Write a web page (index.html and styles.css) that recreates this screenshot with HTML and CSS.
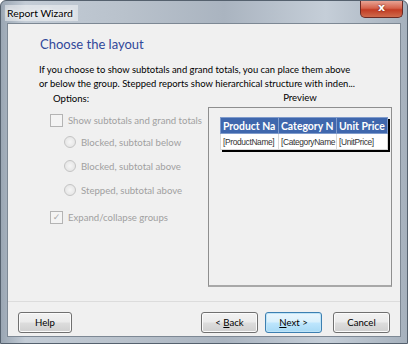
FILE: index.html
```html
<!DOCTYPE html>
<html lang="en">
<head>
    <meta charset="UTF-8"/>
    <title>Report Wizard</title>
    <link rel="stylesheet" href="styles.css">
</head>
<body>
<div class="window">
    <div class="titlebar">
        <span class="title">Report Wizard</span>
        <div class="close">x</div>
    </div>
    <div class="client">
        <div class="heading">Choose the layout</div>
        <div class="desc">
            If you choose to show subtotals and grand totals, you can place them above<br/>
            or below the group. Stepped reports show hierarchical structure with inden...
        </div>
        <div class="body">
            <div class="options">
                <div class="label">Options:</div>
                <div class="opt check-row">
                    <span class="box"></span>
                    <span>Show subtotals and grand totals</span>
                </div>
                <div class="opt radio-row first"><span class="radio"></span><span>Blocked, subtotal below</span></div>
                <div class="opt radio-row"><span class="radio"></span><span>Blocked, subtotal above</span></div>
                <div class="opt radio-row"><span class="radio"></span><span>Stepped, subtotal above</span></div>
                <div class="opt check-row expand">
                    <span class="box checked">&#10003;</span>
                    <span>Expand/collapse groups</span>
                </div>
            </div>
            <div class="preview">
                <div class="label center">Preview</div>
                <div class="preview-box">
                    <table class="grid">
                        <colgroup>
                            <col class="c1"/>
                            <col class="c2"/>
                            <col class="c3"/>
                        </colgroup>
                        <tr>
                            <th>Product Na</th>
                            <th>Category N</th>
                            <th>Unit Price</th>
                        </tr>
                        <tr>
                            <td>[ProductName]</td>
                            <td>[CategoryName</td>
                            <td>[UnitPrice]</td>
                        </tr>
                    </table>
                </div>
            </div>
        </div>
        <div class="footer">
            <button class="btn help">Help</button>
            <div class="spacer"></div>
            <button class="btn">&lt; <u>B</u>ack</button>
            <button class="btn focus"><u>N</u>ext &gt;</button>
            <button class="btn cancel">Cancel</button>
        </div>
    </div>
</div>
</body>
</html>
```
FILE: styles.css
```css
body {
    margin: 0;
    font-family: Lato, "Noto Sans", sans-serif;
    font-size: 9.6px;
}

.window {
    width: 408px;
    height: 344px;
    box-sizing: border-box;
    display: flex;
    flex-direction: column;
    background: linear-gradient(90deg, #9aa6b3 0%, #c3ccd6 6%, #b9c2cc 30%, #aab4c0 55%, #c5ced8 80%, #a6b1bd 100%);
    border: 1px solid #55616e;
    border-radius: 6px 6px 0 0;
}

.titlebar {
    height: 22px;
    display: flex;
    align-items: flex-start;
    justify-content: space-between;
}

.title {
    margin: 4px 0 0 4px;
    color: #000;
    font-size: 10.4px;
    text-shadow: 0 0 6px #fff, 0 0 4px #fff;
    background: rgba(255, 255, 255, 0.45);
    padding: 0 5px 0 2px;
    line-height: 16px;
}

.close {
    width: 41px;
    height: 16px;
    margin-right: 4px;
    border: 1px solid #6b2a24;
    border-top: none;
    border-radius: 0 0 5px 5px;
    background: linear-gradient(#e8a394 0%, #d5624b 45%, #c23c24 55%, #cf6a4c 100%);
    color: #fff;
    font-family: "DejaVu Sans", sans-serif;
    font-weight: bold;
    font-size: 11px;
    line-height: 14px;
    text-align: center;
    text-shadow: 0 0 2px #5a1a10;
}

.client {
    flex: 1;
    margin: 0 6px 6px 6px;
    background: #f0f0f0;
    border: 1px solid #7d8894;
    display: flex;
    flex-direction: column;
    color: #000;
}

.heading {
    margin: 10px 0 0 32px;
    font-size: 13px;
    line-height: 20px;
    color: #30489a;
}

.desc {
    margin: 9px 0 0 31px;
    font-size: 9.45px;
    line-height: 14px;
    white-space: nowrap;
}

.body {
    display: flex;
    margin-top: 1px;
    height: 195px;
}

.options {
    width: 158px;
    padding-left: 42px;
    color: #a0a0a0;
}

.label {
    color: #000;
    line-height: 14px;
    padding-left: 3px;
}

.label.center {
    text-align: center;
    padding-left: 0;
    line-height: 12px;
}

.opt {
    display: flex;
    align-items: center;
    height: 14px;
    white-space: nowrap;
}

.check-row {
    margin-top: 7px;
}

.radio-row {
    margin-top: 10px;
    padding-left: 14px;
}

.radio-row.first {
    margin-top: 8px;
}

.expand {
    margin-top: 13px;
}

.box {
    width: 11px;
    height: 11px;
    border: 1px solid #b4b4b4;
    background: #f4f4f4;
    margin-right: 5px;
    font-family: "DejaVu Sans", sans-serif;
    font-size: 9px;
    line-height: 11px;
    text-align: center;
    color: #a8a8a8;
}

.radio {
    width: 10px;
    height: 10px;
    border: 1px solid #c4c4c4;
    border-radius: 50%;
    background: radial-gradient(#f6f6f6, #e0e0e0);
    margin-right: 5px;
}

.preview {
    width: 184px;
    display: flex;
    flex-direction: column;
}

.preview-box {
    margin-top: 3px;
    height: 177px;
    border: 1px solid #8e8e8e;
    border-bottom: 2px solid #a8a8a8;
    padding: 9px 0 0 11px;
}

.grid {
    border-collapse: collapse;
    table-layout: fixed;
    font-family: "Liberation Sans", sans-serif;
    box-shadow: 2px 2px 0 #000;
    width: 167px;
}

.c1, .c2 {
    width: 58px;
}

.c3 {
    width: 51px;
}

.grid th {
    background: #3f67ad;
    color: #fff;
    font-family: Lato, sans-serif;
    font-size: 10.4px;
    text-align: left;
    height: 15px;
    padding: 0 2px;
    border: 1px solid #7f9bcc;
    white-space: nowrap;
    overflow: hidden;
}

.grid td {
    background: #fff;
    color: #333;
    font-size: 8.4px;
    letter-spacing: -0.35px;
    height: 15px;
    padding: 0 2px;
    border: 1px solid #d8d8d8;
    white-space: nowrap;
    overflow: hidden;
}

.footer {
    margin-top: auto;
    border-top: 1px solid #dcdcdc;
    display: flex;
    align-items: center;
    padding: 10px 10px 3px 10px;
    gap: 7px;
}

.spacer {
    flex: 1;
}

.btn {
    width: 57px;
    height: 21px;
    font-family: Lato, "Noto Sans", sans-serif;
    font-size: 9.6px;
    color: #000;
    border: 1px solid #707070;
    border-radius: 3px;
    background: linear-gradient(#f2f2f2 0%, #ebebeb 48%, #dddddd 52%, #cfcfcf 100%);
    padding: 0;
    line-height: 18px;
    box-shadow: inset 0 0 0 1px #fbfbfb;
}

.btn.help {
    width: 54px;
}

.btn.focus {
    border-color: #3c7fb1;
    box-shadow: inset 0 0 0 1px #bfe4f7;
    background: linear-gradient(#eaf6fd 0%, #d9f0fc 48%, #bee6fd 52%, #a7d9f5 100%);
}

.btn.cancel {
    margin-left: 4px;
}
```
